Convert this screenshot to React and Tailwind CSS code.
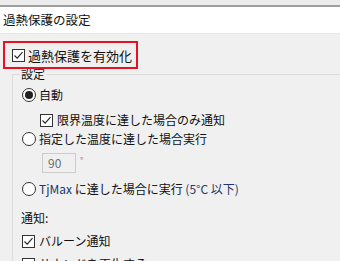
import React from 'react';

const Check = ({ checked }) => (
  <span className="w-[13px] h-[13px] border border-[#333] bg-white flex items-center justify-center shrink-0">
    {checked && (
      <svg width="11" height="11" viewBox="0 0 11 11">
        <path d="M1.5 5.5 L4.2 8.2 L9.5 2.2" fill="none" stroke="#222" strokeWidth="1.1" />
      </svg>
    )}
  </span>
);

const Radio = ({ checked }) => (
  <span className="w-[14px] h-[14px] rounded-full border border-[#333] bg-white flex items-center justify-center shrink-0">
    {checked && <span className="w-[8px] h-[8px] rounded-full bg-[#222]" />}
  </span>
);

export default function App() {
  return (
    <div
      className="w-[340px] h-[261px] overflow-hidden flex flex-col bg-[#f0f0f0] text-[#111] text-[12px] leading-none"
      style={{ fontFamily: '"Noto Sans CJK JP", "Noto Sans", sans-serif' }}
    >
      <div className="h-[5px] bg-[#ececec] shrink-0" />
      <div className="h-[2px] bg-[#a0a0a0] shrink-0" />
      <div className="h-[27px] bg-white border-b border-[#e6e6e6] flex items-center pl-[3px] text-[12.5px] shrink-0">
        過熱保護の設定
      </div>

      <div className="relative z-10 ml-[3px] mt-[7px] w-[135px] h-[28px] border-2 border-[#e81123] flex items-center gap-[3px] pl-[7px] shrink-0">
        <Check checked />
        <span className="text-[13px]">過熱保護を有効化</span>
      </div>

      <div className="relative ml-[12px] mt-[5px] flex-1 border-l border-t border-[#dcdcdc]">
        <span className="absolute -top-[7px] left-[7px] bg-[#f0f0f0] px-[1px]">設定</span>

        <div className="flex items-center gap-[3px] ml-[9px] mt-[11px] h-[18px]">
          <Radio checked />
          <span>自動</span>
        </div>
        <div className="flex items-center gap-[4px] ml-[27px] mt-[7px] h-[18px]">
          <Check checked />
          <span>限界温度に達した場合のみ通知</span>
        </div>
        <div className="flex items-center gap-[3px] ml-[9px] mt-[1px] h-[18px]">
          <Radio />
          <span>指定した温度に達した場合実行</span>
        </div>
        <div className="flex items-start ml-[29px] mt-[5px] h-[20px]">
          <div className="w-[34px] h-[20px] border border-[#cccccc] bg-[#f0f0f0] flex items-center pl-[5px] text-[#6d6d6d]">
            90
          </div>
          <span className="ml-[4px] mt-[3px] text-[9px] text-[#888]">°</span>
        </div>
        <div className="flex items-center gap-[3px] ml-[9px] mt-[7px] h-[18px]">
          <Radio />
          <span>
            <span className="text-[#23356e]">TjMax</span> に達した場合に実行 <span className="text-[#23356e]">(5°C 以下)</span>
          </span>
        </div>
        <div className="flex items-center ml-[8px] mt-[11px] h-[18px]">通知:</div>
        <div className="flex items-center gap-[4px] ml-[9px] mt-[5px] h-[18px]">
          <Check checked />
          <span>バルーン通知</span>
        </div>
        <div className="flex items-center gap-[4px] ml-[9px] mt-[5px] h-[18px]">
          <Check />
          <span>サウンドを再生する</span>
        </div>
      </div>
    </div>
  );
}
